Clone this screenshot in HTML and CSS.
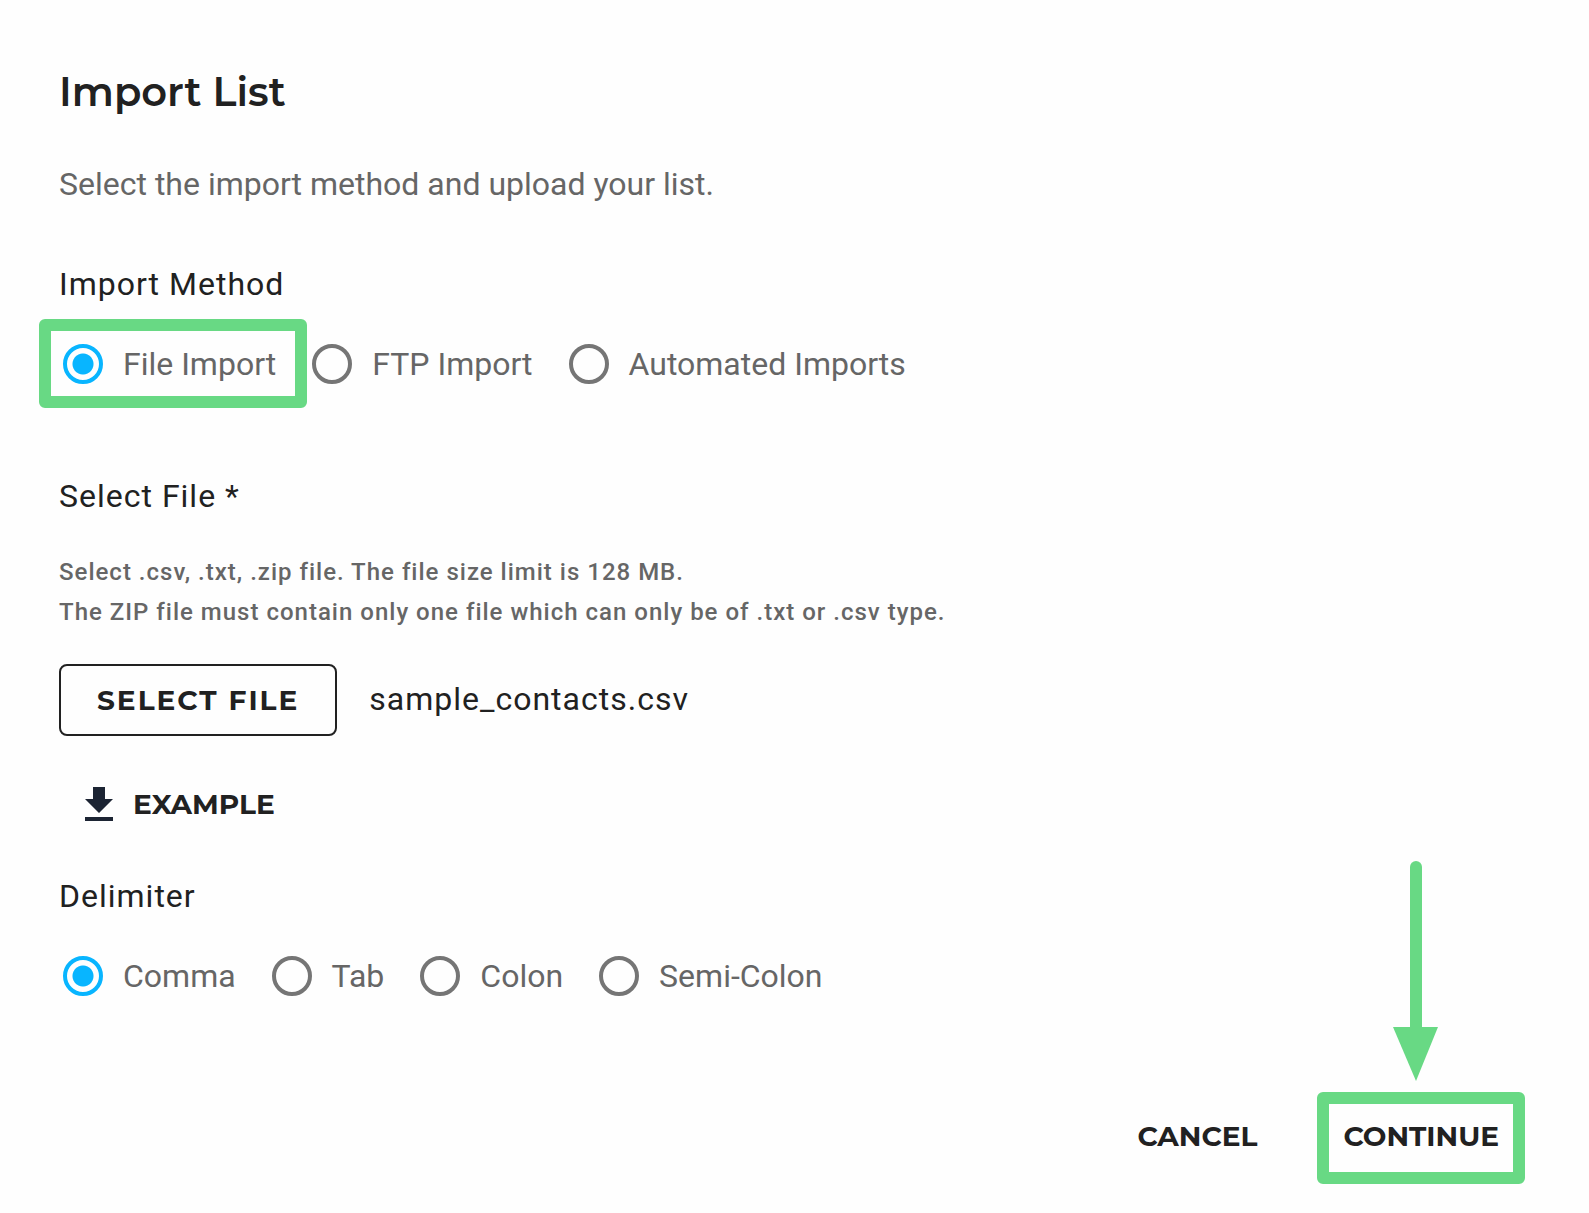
FILE: index.html
```html
<!DOCTYPE html>
<html lang="en">
<head>
  <meta charset="UTF-8" />
  <meta name="viewport" content="width=device-width, initial-scale=1.0"/>
  <title>Import List</title>
  <link rel="stylesheet" href="styles.css">
</head>
<body>
  <form class="import-form">
    <h1>Import List</h1>
    <p class="intro">Select the import method and upload your list.</p>

    <fieldset class="method">
      <legend>Import Method</legend>
      <div class="radio-group">
        <label class="radio highlight"><input type="radio" name="method" value="file" checked>File Import</label>
        <label class="radio"><input type="radio" name="method" value="ftp">FTP Import</label>
        <label class="radio"><input type="radio" name="method" value="auto">Automated Imports</label>
      </div>
    </fieldset>

    <section class="file">
      <h2>Select File *</h2>
      <p class="hint">Select .csv, .txt, .zip file. The file size limit is 128 MB.<br>
      The ZIP file must contain only one file which can only be of .txt or .csv type.</p>
      <div class="file-row">
        <button type="button" class="btn-outline">SELECT FILE</button>
        <span class="file-name">sample_contacts.csv</span>
      </div>
      <a class="example" href="#">
        <svg width="28" height="34" viewBox="0 0 28 34" aria-hidden="true">
          <path d="M8 0h12v12h8L14 26 0 12h8zM0 30h28v4H0z" fill="#1c2433"/>
        </svg>
        EXAMPLE
      </a>
    </section>

    <fieldset class="delimiter">
      <legend>Delimiter</legend>
      <div class="radio-group">
        <label class="radio"><input type="radio" name="delimiter" value="comma" checked>Comma</label>
        <label class="radio"><input type="radio" name="delimiter" value="tab">Tab</label>
        <label class="radio"><input type="radio" name="delimiter" value="colon">Colon</label>
        <label class="radio"><input type="radio" name="delimiter" value="semicolon">Semi-Colon</label>
      </div>
    </fieldset>

    <div class="actions">
      <button type="button" class="btn-text">CANCEL</button>
      <div class="next">
        <svg class="arrow" width="46" height="220" viewBox="0 0 46 220" aria-hidden="true">
          <path d="M23 6v165" stroke="#68d984" stroke-width="12" stroke-linecap="round"/>
          <path d="M0 166h45L23 220z" fill="#68d984"/>
        </svg>
        <button type="submit" class="btn-text highlight">CONTINUE</button>
      </div>
    </div>
  </form>
</body>
</html>
```

FILE: styles.css
```css
* {
  box-sizing: border-box;
}
body {
  margin: 0;
  background: #fefefe;
  color: #212121;
  font-family: Roboto, sans-serif;
  font-size: 32px;
  line-height: 40px;
}
.import-form {
  padding: 68px 90px 56px 59px;
}
h1 {
  margin: 0;
  font-family: Montserrat, Inter, sans-serif;
  font-size: 40px;
  font-weight: 600;
  line-height: 48px;
}
.intro {
  margin: 48px 0 0;
  color: #666;
}
fieldset {
  margin: 0;
  padding: 0;
  border: 0;
}
legend {
  padding: 0;
  letter-spacing: 1px;
}
.method {
  margin-top: 60px;
}
.radio-group {
  display: flex;
  flex-wrap: wrap;
  gap: 36px;
  margin-top: 40px;
  padding-left: 4px;
}
.radio {
  display: flex;
  align-items: center;
  gap: 20px;
  color: #666;
}
.radio input {
  appearance: none;
  width: 40px;
  height: 40px;
  margin: 0;
  border: 4px solid #757575;
  border-radius: 50%;
}
.radio input:checked {
  border-color: #08b5ff;
  background: radial-gradient(circle, #08b5ff 0 10px, transparent 11px);
}
/* green marker box around the control */
.highlight {
  position: relative;
}
.highlight::after {
  content: "";
  position: absolute;
  inset: -25px -31px -24px -24px;
  border: 12px solid #68d984;
  border-radius: 6px;
  pointer-events: none;
}
h2 {
  margin: 92px 0 0;
  font-size: 32px;
  font-weight: 400;
  letter-spacing: 1px;
}
.hint {
  margin: 36px 0 0;
  color: #666;
  font-size: 24px;
  font-weight: 500;
  letter-spacing: 1px;
}
.file-row {
  display: flex;
  align-items: baseline;
  gap: 32px;
  margin-top: 32px;
}
button,
.example {
  color: #212121;
  font-family: Montserrat, Inter, sans-serif;
  font-size: 28px;
  font-weight: 700;
  line-height: 40px;
}
button {
  border: 0;
  background: none;
  cursor: pointer;
}
.btn-outline {
  padding: 14px 36px;
  border: 2px solid #212121;
  border-radius: 8px;
  letter-spacing: 2px;
}
.file-name {
  letter-spacing: 1px;
}
.example {
  display: flex;
  align-items: center;
  gap: 20px;
  width: fit-content;
  margin-top: 48px;
  padding-left: 26px;
  text-decoration: none;
}
.delimiter {
  margin-top: 52px;
}
.actions {
  display: flex;
  justify-content: flex-end;
  align-items: flex-end;
  gap: 86px;
  margin-top: 119px;
}
.btn-text {
  padding: 0;
}
.next {
  position: relative;
}
.next .highlight::after {
  inset: -24px -26px -28px;
}
.arrow {
  position: absolute;
  bottom: 75px;
  left: 50%;
  margin-left: -28px;
}
```
